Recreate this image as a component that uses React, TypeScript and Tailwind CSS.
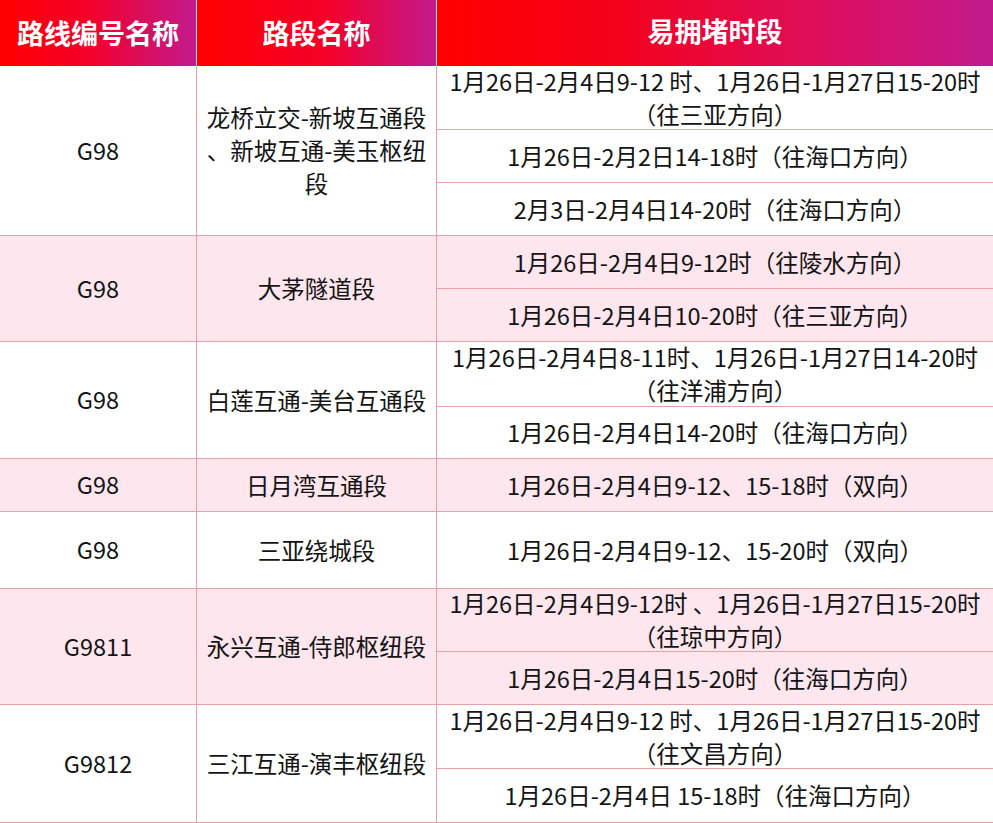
const groups = [
  {
    code: "G98",
    name: ["龙桥立交-新坡互通段", "、新坡互通-美玉枢纽", "段"],
    pink: false,
    rows: [
      { h: 64, t: ["1月26日-2月4日9-12 时、1月26日-1月27日15-20时", "（往三亚方向）"] },
      { h: 53, t: ["1月26日-2月2日14-18时（往海口方向）"] },
      { h: 53, t: ["2月3日-2月4日14-20时（往海口方向）"] },
    ],
  },
  {
    code: "G98",
    name: ["大茅隧道段"],
    pink: true,
    rows: [
      { h: 53, t: ["1月26日-2月4日9-12时（往陵水方向）"] },
      { h: 53, t: ["1月26日-2月4日10-20时（往三亚方向）"] },
    ],
  },
  {
    code: "G98",
    name: ["白莲互通-美台互通段"],
    pink: false,
    rows: [
      { h: 65, t: ["1月26日-2月4日8-11时、1月26日-1月27日14-20时", "（往洋浦方向）"] },
      { h: 52, t: ["1月26日-2月4日14-20时（往海口方向）"] },
    ],
  },
  {
    code: "G98",
    name: ["日月湾互通段"],
    pink: true,
    rows: [{ h: 53, t: ["1月26日-2月4日9-12、15-18时（双向）"] }],
  },
  {
    code: "G98",
    name: ["三亚绕城段"],
    pink: false,
    rows: [{ h: 77, t: ["1月26日-2月4日9-12、15-20时（双向）"] }],
  },
  {
    code: "G9811",
    name: ["永兴互通-侍郎枢纽段"],
    pink: true,
    rows: [
      { h: 63, t: ["1月26日-2月4日9-12时 、1月26日-1月27日15-20时", "（往琼中方向）"] },
      { h: 53, t: ["1月26日-2月4日15-20时（往海口方向）"] },
    ],
  },
  {
    code: "G9812",
    name: ["三江互通-演丰枢纽段"],
    pink: false,
    rows: [
      { h: 64, t: ["1月26日-2月4日9-12 时、1月26日-1月27日15-20时", "（往文昌方向）"] },
      { h: 54, t: ["1月26日-2月4日 15-18时（往海口方向）"] },
    ],
  },
];

function Lines({ lines }: { lines: string[] }) {
  return (
    <div className="text-center leading-[33px]">
      {lines.map((l, i) => (
        <div key={i} className="whitespace-pre">{l}</div>
      ))}
    </div>
  );
}

export default function App() {
  return (
    <div
      className="w-[993px] h-[823px] overflow-hidden bg-white text-[23.5px] text-[#141414]"
      style={{ fontFamily: '"Noto Sans CJK SC", "Noto Sans", sans-serif' }}
    >
      <div className="flex h-[66px] text-white font-bold text-[27px]">
        <div className="w-[197px] flex items-center justify-center border-r border-[#f6c9cf] bg-[linear-gradient(to_right,#ff0000_0%,#f4002a_45%,#c21a8e_100%)]">
          路线编号名称
        </div>
        <div className="w-[240px] flex items-center justify-center border-r border-[#f6c9cf] bg-[linear-gradient(to_right,#ff0000_0%,#f4002a_55%,#c21a8e_100%)]">
          路段名称
        </div>
        <div className="flex-1 flex items-center justify-center pb-1 bg-[linear-gradient(to_right,#ff0000_0%,#f50018_30%,#dc0f5e_70%,#c21a8e_100%)]">
          易拥堵时段
        </div>
      </div>
      {groups.map((g, gi) => (
        <div key={gi} className={`flex ${g.pink ? "bg-[#fde6ee]" : "bg-white"}`}>
          <div className="w-[197px] flex items-center justify-center border-r border-b border-[#eaa0a9]">
            {g.code}
          </div>
          <div className="w-[240px] flex items-center justify-center border-r border-b border-[#eaa0a9]">
            <Lines lines={g.name} />
          </div>
          <div className="flex-1 flex flex-col">
            {g.rows.map((r, ri) => (
              <div
                key={ri}
                className="flex items-center justify-center border-b border-[#eaa0a9]"
                style={{ height: r.h }}
              >
                <Lines lines={r.t} />
              </div>
            ))}
          </div>
        </div>
      ))}
    </div>
  );
}
